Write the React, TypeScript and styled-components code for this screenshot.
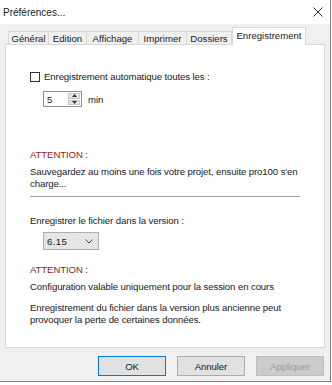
import React, { useState } from 'react';
import styled, { createGlobalStyle } from 'styled-components';

const GlobalStyle = createGlobalStyle`
  html, body {
    margin: 0;
    padding: 0;
    background: #ffffff;
  }
  body {
    font-family: "Liberation Sans", Arial, sans-serif;
    font-size: 10px;
    color: #1a1a1a;
  }
`;

const Frame = styled.div`
  width: 330px;
  height: 381px;
  background: #f0f0f0;
  border-right: 1px solid #7f7f7f;
  border-bottom: 1px solid #7f7f7f;
  display: flex;
  flex-direction: column;
`;

const TitleBar = styled.div`
  height: 24px;
  background: #ffffff;
  display: flex;
  align-items: center;
  justify-content: space-between;
  padding: 0 7px 0 3px;
  font-size: 10px;
`;

const Body = styled.div`
  padding: 0 5px;
  display: flex;
  flex-direction: column;
`;

const TabStrip = styled.div`
  display: flex;
  align-items: flex-end;
  height: 21px;
  padding-left: 3px;
  margin-bottom: -1px;
  position: relative;
  z-index: 1;
`;

const Tab = styled.div<{ $w: number; $active?: boolean }>`
  width: ${p => p.$w}px;
  height: ${p => (p.$active ? 18 : 14)}px;
  box-sizing: border-box;
  border: 1px solid #d9d9d9;
  border-bottom: ${p => (p.$active ? 'none' : '1px solid #d9d9d9')};
  border-left: ${p => (p.$active ? '1px solid #d9d9d9' : 'none')};
  background: ${p => (p.$active ? '#ffffff' : '#f0f0f0')};
  display: flex;
  align-items: ${p => (p.$active ? 'flex-start' : 'center')};
  padding-top: ${p => (p.$active ? '2px' : '0')};
  justify-content: center;
  font-size: 9.6px;
  white-space: nowrap;
  &:first-child {
    border-left: 1px solid #d9d9d9;
  }
`;

const Panel = styled.div`
  height: 304px;
  box-sizing: border-box;
  background: #ffffff;
  border: 1px solid #d9d9d9;
  padding: 26px 24px 0 24px;
  display: flex;
  flex-direction: column;
  font-size: 9.6px;
  letter-spacing: -0.1px;
  white-space: nowrap;
`;

const Row = styled.div<{ $indent?: number; $top?: number }>`
  display: flex;
  align-items: center;
  margin-left: ${p => p.$indent ?? 0}px;
  margin-top: ${p => p.$top ?? 0}px;
`;

const Check = styled.span`
  width: 10px;
  height: 10px;
  box-sizing: border-box;
  border: 1px solid #333333;
  background: #ffffff;
  margin-right: 4px;
`;

const SpinBox = styled.div`
  width: 39px;
  height: 16px;
  box-sizing: border-box;
  border: 1px solid #8f8f8f;
  display: flex;
  align-items: stretch;
  background: #ffffff;
`;

const SpinValue = styled.div`
  flex: 1;
  padding-left: 3px;
  display: flex;
  align-items: center;
`;

const SpinButtons = styled.div`
  width: 12px;
  display: flex;
  flex-direction: column;
  gap: 1px;
  padding: 1px 1px 1px 0;
`;

const SpinButton = styled.div`
  flex: 1;
  background: #e6e6e6;
  border: 1px solid #c8c8c8;
  display: flex;
  align-items: center;
  justify-content: center;
`;

const Unit = styled.span`
  margin-left: 6px;
`;

const Warning = styled.div<{ $top: number }>`
  color: #8a1c1c;
  line-height: 12px;
  margin-top: ${p => p.$top}px;
`;

const Text = styled.div<{ $top: number }>`
  line-height: 12px;
  margin-top: ${p => p.$top}px;
`;

const Rule = styled.hr`
  border: none;
  border-top: 1px solid #a0a0a0;
  margin: 6px 0 0 0;
  width: 270px;
`;

const Select = styled.div`
  width: 56px;
  height: 18px;
  box-sizing: border-box;
  margin-left: 13px;
  margin-top: 5px;
  background: #e5e5e5;
  border: 1px solid #adadad;
  display: flex;
  align-items: center;
  justify-content: space-between;
  padding: 0 5px 0 3px;
  letter-spacing: 0.4px;
`;

const Footer = styled.div`
  display: flex;
  justify-content: flex-end;
  gap: 11px;
  margin-top: 8px;
  padding-right: 1px;
`;

const Button = styled.button<{ $default?: boolean }>`
  width: 68px;
  height: 20px;
  box-sizing: border-box;
  font-family: "Liberation Sans", Arial, sans-serif;
  font-size: 9.6px;
  letter-spacing: -0.1px;
  color: #1a1a1a;
  background: #e1e1e1;
  border: 1px solid ${p => (p.$default ? '#0078d7' : '#adadad')};
  padding: 0;
  &:disabled {
    background: #cccccc;
    border-color: #bfbfbf;
    color: #9a9a9a;
  }
`;

const Arrow = ({ up }: { up?: boolean }) => (
  <svg width="5" height="3" viewBox="0 0 5 3">
    <path d={up ? 'M0 3 L2.5 0 L5 3 Z' : 'M0 0 L2.5 3 L5 0 Z'} fill="#333" />
  </svg>
);

const tabs = [
  { label: 'Général', w: 41 },
  { label: 'Edition', w: 38 },
  { label: 'Affichage', w: 52 },
  { label: 'Imprimer', w: 48 },
  { label: 'Dossiers', w: 45 },
  { label: 'Enregistrement', w: 74 },
];

export default function App() {
  const [active] = useState(5);

  return (
    <>
      <GlobalStyle />
      <Frame>
        <TitleBar>
          <span>Préférences...</span>
          <svg width="10" height="10" viewBox="0 0 10 10">
            <path d="M0.5 0.5 L9.5 9.5 M9.5 0.5 L0.5 9.5" stroke="#333" strokeWidth="1" />
          </svg>
        </TitleBar>
        <Body>
          <TabStrip>
            {tabs.map((t, i) => (
              <Tab key={t.label} $w={t.w} $active={i === active}>
                {t.label}
              </Tab>
            ))}
          </TabStrip>
          <Panel>
            <Row>
              <Check />
              <span>Enregistrement automatique toutes les :</span>
            </Row>
            <Row $indent={13} $top={9}>
              <SpinBox>
                <SpinValue>5</SpinValue>
                <SpinButtons>
                  <SpinButton><Arrow up /></SpinButton>
                  <SpinButton><Arrow /></SpinButton>
                </SpinButtons>
              </SpinBox>
              <Unit>min</Unit>
            </Row>

            <Warning $top={42}>ATTENTION :</Warning>
            <Text $top={5}>
              Sauvegardez au moins une fois votre projet, ensuite pro100 s'en
              <br />
              charge...
            </Text>
            <Rule />

            <Text $top={18}>Enregistrer le fichier dans la version :</Text>
            <Select>
              <span>6.15</span>
              <svg width="8" height="5" viewBox="0 0 8 5">
                <path d="M0.5 0.5 L4 4 L7.5 0.5" stroke="#444" fill="none" strokeWidth="1" />
              </svg>
            </Select>

            <Warning $top={14}>ATTENTION :</Warning>
            <Text $top={5}>Configuration valable uniquement pour la session en cours</Text>
            <Text $top={9}>
              Enregistrement du fichier dans la version plus ancienne peut
              <br />
              provoquer la perte de certaines données.
            </Text>
          </Panel>
          <Footer>
            <Button $default>OK</Button>
            <Button>Annuler</Button>
            <Button disabled>Appliquer</Button>
          </Footer>
        </Body>
      </Frame>
    </>
  );
}
